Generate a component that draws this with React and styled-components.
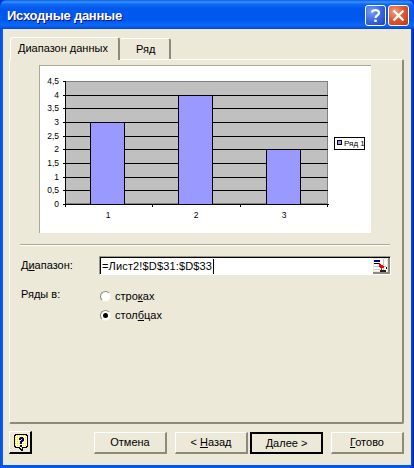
import React from "react";
import styled, { createGlobalStyle } from "styled-components";

const Global = createGlobalStyle`
  html, body { margin: 0; padding: 0; background: #0831d9; }
  #root { width: 414px; height: 468px; }
`;

const Win = styled.div`
  width: 414px;
  height: 468px;
  box-sizing: border-box;
  display: flex;
  flex-direction: column;
  padding: 0 3px 3px 3px;
  border-radius: 7px 7px 0 0;
  background: linear-gradient(90deg, #0a4be0 0, #0a5cf0 2px, #0058ee 4px, #0058ee 410px, #0a44d0 412px, #0018b0 414px);
  font-family: "Liberation Sans", Tahoma, sans-serif;
  font-size: 11px;
  color: #000;
  overflow: hidden;
`;

const TitleBar = styled.div`
  height: 29px;
  margin: 0 -3px;
  padding: 5px 5px 0 7px;
  box-sizing: border-box;
  display: flex;
  align-items: flex-start;
  justify-content: space-between;
  flex: none;
  background: linear-gradient(180deg, #0a5ce8 0, #3a93ff 2px, #0f6af5 4px, #0058ee 9px, #0058ee 20px, #0a68f8 25px, #0a5ae8 27px, #0046d0 29px);
`;

const Title = styled.span`
  font: bold 13px "Liberation Sans", sans-serif;
  line-height: 21px;
  letter-spacing: -0.25px;
  color: #fff;
  text-shadow: 1px 1px 0 #0f1089;
`;

const TitleButtons = styled.div`
  display: flex;
  gap: 2px;
`;

const CapBtn = styled.div`
  width: 21px;
  height: 21px;
  box-sizing: border-box;
  border: 1px solid #fff;
  border-radius: 3px;
  background: ${(p) =>
    p.$close
      ? "radial-gradient(circle at 30% 30%, #f0a080 0, #e25a30 45%, #c23210 100%)"
      : "radial-gradient(circle at 30% 30%, #7aa0f5 0, #3a68e0 50%, #1c3fc0 100%)"};
`;

const Body = styled.div`
  flex: 1;
  background: #ece9d8;
  display: flex;
  flex-direction: column;
  padding: 7px 7px 0 6px;
  min-height: 0;
`;

const TabRow = styled.div`
  display: flex;
  align-items: flex-end;
  height: 23px;
  flex: none;
  padding-left: 1px;
  position: relative;
  z-index: 1;
`;

const Tab = styled.div`
  box-sizing: border-box;
  width: ${(p) => p.$w}px;
  height: ${(p) => (p.$active ? 23 : 21)}px;
  margin-bottom: ${(p) => (p.$active ? -1 : 0)}px;
  padding-left: ${(p) => p.$pad}px;
  line-height: ${(p) => (p.$active ? 21 : 20)}px;
  border-top: 1px solid #fff;
  border-left: 1px solid ${(p) => (p.$active ? "#fff" : "#ece9d8")};
  border-right: 2px solid #8c8a7c;
  border-radius: 3px 3px 0 0;
  background: #ece9d8;
  white-space: nowrap;
`;

const Panel = styled.div`
  width: 395px;
  height: 365px;
  box-sizing: border-box;
  flex: none;
  border: 1px solid #fff;
  border-right: 2px solid #8c8a7c;
  border-bottom: 2px solid #8c8a7c;
  border-radius: 2px;
  padding: 5px 0 0 29px;
`;

const ChartBox = styled.div`
  width: 332px;
  height: 168px;
  box-sizing: border-box;
  border-top: 1px solid #aca899;
  border-left: 1px solid #aca899;
  background: #fff;
  svg { display: block; }
`;

const Divider = styled.div`
  width: 370px;
  height: 1px;
  margin: 11px 0 0 -19px;
  background: #aca899;
  border-bottom: 1px solid #fff;
`;

const FormRow = styled.div`
  display: flex;
  align-items: ${(p) => p.$align || "center"};
  margin: ${(p) => p.$top}px 0 0 -18px;
`;

const Label = styled.label`
  width: 78px;
  flex: none;
  padding-bottom: ${(p) => p.$lift || 0}px;
`;

const RangeField = styled.div`
  width: 292px;
  height: 19px;
  box-sizing: border-box;
  border-top: 1px solid #9d9a88;
  border-left: 1px solid #9d9a88;
  border-bottom: 1px solid #fff;
  border-right: 1px solid #fff;
  background: #fff;
  display: flex;
`;

const RangeInner = styled.div`
  flex: 1;
  display: flex;
  align-items: center;
  justify-content: space-between;
  box-sizing: border-box;
  border-top: 1px solid #000;
  border-left: 1px solid #000;
  padding-left: 1px;
`;

const RangeText = styled.span`
  border-right: 1px solid #000;
  line-height: 15px;
  letter-spacing: 0.15px;
  padding-right: 1px;
`;

const RadioColumn = styled.div`
  display: flex;
  flex-direction: column;
  gap: 5px;
  padding-top: 1px;
`;

const RadioRow = styled.div`
  display: flex;
  align-items: center;
  gap: 4px;
  height: 14px;
  margin-left: 1px;
`;

const RadioCircle = styled.span`
  width: 11px;
  height: 11px;
  box-sizing: border-box;
  border-radius: 50%;
  border: 1px solid #8a8878;
  border-right-color: #f4f2e8;
  border-bottom-color: #f4f2e8;
  background: #fff;
  display: flex;
  align-items: center;
  justify-content: center;
  &::after {
    content: "";
    width: 5px;
    height: 5px;
    border-radius: 50%;
    background: ${(p) => (p.$on ? "#000" : "transparent")};
  }
`;

const Footer = styled.div`
  display: flex;
  align-items: flex-start;
  margin-top: 7px;
`;

const HelpBtn = styled.div`
  width: 23px;
  height: 23px;
  box-sizing: border-box;
  border-top: 1px solid #fff;
  border-left: 1px solid #fff;
  border-right: 2px solid #000;
  border-bottom: 2px solid #000;
  display: flex;
  align-items: center;
  justify-content: center;
  margin-right: 62px;
`;

const Btn = styled.div`
  width: 73px;
  height: 22px;
  margin-top: 1px;
  margin-right: ${(p) => p.$mr}px;
  box-sizing: border-box;
  text-align: center;
  line-height: ${(p) => (p.$def ? 18 : 19)}px;
  border-top: ${(p) => (p.$def ? "2px solid #000" : "1px solid #fff")};
  border-left: ${(p) => (p.$def ? "2px solid #000" : "1px solid #fff")};
  border-right: 2px solid ${(p) => (p.$def ? "#000" : "#8c8a7c")};
  border-bottom: 2px solid ${(p) => (p.$def ? "#000" : "#8c8a7c")};
  background: #ece9d8;
`;

const grid = [95, 108, 122, 136, 149, 163, 177, 190];
const yLabels = [
  ["4,5", 81], ["4", 95], ["3,5", 108], ["3", 122], ["2,5", 136],
  ["2", 149], ["1,5", 163], ["1", 177], ["0,5", 190], ["0", 204],
];
const bars = [
  [91, 122], [179, 95], [267, 149],
];

function Chart() {
  const ox = 40, oy = 66;
  return (
    <svg width="331" height="167" viewBox={`${ox} ${oy} 331 167`} shapeRendering="crispEdges">
      <rect x="65.5" y="81.5" width="262" height="122" fill="#c0c0c0" stroke="#808080" />
      {grid.map((y) => (
        <line key={y} x1="65" x2="328" y1={y + 0.5} y2={y + 0.5} stroke="#000" />
      ))}
      {bars.map(([x, y]) => (
        <rect key={x} x={x - 0.5} y={y + 0.5} width="34" height={204 - y} fill="#9999ff" stroke="#000" />
      ))}
      <line x1="65.5" x2="65.5" y1="81" y2="205" stroke="#000" />
      <line x1="63" x2="329" y1="204.5" y2="204.5" stroke="#000" />
      {yLabels.map(([, y]) => (
        <line key={y} x1="63" x2="65" y1={y + 0.5} y2={y + 0.5} stroke="#000" />
      ))}
      {[65, 152, 240, 327].map((x) => (
        <line key={x} x1={x + 0.5} x2={x + 0.5} y1="205" y2="207" stroke="#000" />
      ))}
      <g fontFamily="'Liberation Sans', sans-serif" fontSize="8.5" fill="#000" shapeRendering="auto">
        {yLabels.map(([t, y]) => (
          <text key={t} x="59" y={y + 3} textAnchor="end">{t}</text>
        ))}
        {[[108, "1"], [196, "2"], [284, "3"]].map(([x, t]) => (
          <text key={t} x={x} y="218" textAnchor="middle">{t}</text>
        ))}
      </g>
      <rect x="334.5" y="137.5" width="30" height="12" fill="#fff" stroke="#000" />
      <rect x="337.5" y="140.5" width="4" height="4" fill="#9999ff" stroke="#000" />
      <text x="344" y="146" fontFamily="'Liberation Sans', sans-serif" fontSize="8">Ряд 1</text>
    </svg>
  );
}

function RangeIcon() {
  return (
    <svg width="17" height="16" viewBox="0 0 17 16" shapeRendering="crispEdges">
      <rect x="0" y="0" width="17" height="16" fill="#ece9d8" />
      <rect x="1" y="1" width="13" height="12" fill="#fff" />
      <path d="M1 8.5h12M1 11.5h6M10.5 1v12" stroke="#c4c4c4" fill="none" />
      <rect x="1" y="2" width="6" height="2" fill="#00007f" />
      <path d="M1 5.5h6" stroke="#000" fill="none" />
      <rect x="7" y="12" width="6" height="2" fill="#202020" />
      <rect x="13" y="9" width="1" height="2" fill="#000" />
      <path d="M6 5h1v1h1v1h2v1h1v2h-2v2H8v-2H7V9H6z" fill="#f00" />
      <rect x="15" y="0" width="2" height="16" fill="#8c8a7c" />
      <rect x="0" y="14" width="17" height="2" fill="#8c8a7c" />
    </svg>
  );
}

function HelpIcon() {
  return (
    <svg width="18" height="19" viewBox="0 0 18 19" shapeRendering="crispEdges">
      <defs>
        <pattern id="dither" width="2" height="2" patternUnits="userSpaceOnUse">
          <rect width="2" height="2" fill="#ffffb8" />
          <rect width="1" height="1" fill="#ffe800" />
          <rect x="1" y="1" width="1" height="1" fill="#ffffff" />
        </pattern>
      </defs>
      <path d="M4.5 1.5h11v1h1v11h-1v1h-4v3h-1v-1h-1v-1h-1v-1h-4v-1h-1v-11h1z" fill="url(#dither)" stroke="#000" />
      <path d="M8 5h1V4h3v1h1v3h-1v1h-1v2H9V8h1V7h1V6h-1v1H8z" fill="#00007f" />
      <rect x="9" y="12" width="2" height="1.5" fill="#00007f" />
    </svg>
  );
}

export default function App() {
  return (
    <>
      <Global />
      <Win>
        <TitleBar>
          <Title>Исходные данные</Title>
          <TitleButtons>
            <CapBtn>
              <svg width="19" height="19" viewBox="0 0 19 19">
                <path d="M6 6.5C6.2 3.5 13 3 13 6.8c0 2.8-3.5 2.6-3.5 5.2" fill="none" stroke="#fff" strokeWidth="2.2" />
                <rect x="8.3" y="13.6" width="2.4" height="2.4" fill="#fff" />
              </svg>
            </CapBtn>
            <CapBtn $close>
              <svg width="19" height="19" viewBox="0 0 19 19">
                <path d="M4.5 4.5l10 10M14.5 4.5l-10 10" stroke="#fff" strokeWidth="2.4" />
              </svg>
            </CapBtn>
          </TitleButtons>
        </TitleBar>
        <Body>
          <TabRow>
            <Tab $active $w={110} $pad={7}>Диапазон данных</Tab>
            <Tab $w={51} $pad={15}>Ряд</Tab>
          </TabRow>
          <Panel>
            <ChartBox><Chart /></ChartBox>
            <Divider />
            <FormRow $top={10}>
              <Label $lift={2}>Д<u>и</u>апазон:</Label>
              <RangeField>
                <RangeInner>
                  <RangeText>=Лист2!$D$31:$D$33</RangeText>
                  <RangeIcon />
                </RangeInner>
              </RangeField>
            </FormRow>
            <FormRow $top={13} $align="flex-start">
              <Label>Ряды в:</Label>
              <RadioColumn>
                <RadioRow><RadioCircle /><span>стро<u>к</u>ах</span></RadioRow>
                <RadioRow><RadioCircle $on /><span>стол<u>б</u>цах</span></RadioRow>
              </RadioColumn>
            </FormRow>
          </Panel>
          <Footer>
            <HelpBtn><HelpIcon /></HelpBtn>
            <Btn $mr={8}>Отмена</Btn>
            <Btn $mr={2}>&lt; <u>Н</u>азад</Btn>
            <Btn $def $mr={8}><u>Д</u>алее &gt;</Btn>
            <Btn $mr={0}><u>Г</u>отово</Btn>
          </Footer>
        </Body>
      </Win>
    </>
  );
}
